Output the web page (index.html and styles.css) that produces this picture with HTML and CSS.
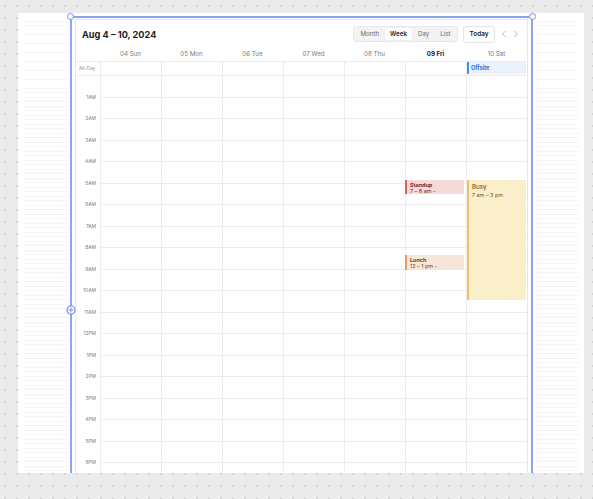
FILE: index.html
```html
<!DOCTYPE html>
<html>
<head>
<meta charset="utf-8">
<link rel="stylesheet" href="styles.css">
</head>
<body>
<div class="canvas">
  <div class="panel">
    <div class="stripes stripes-left"></div>
    <div class="frame">
      <span class="handle handle-tl"></span>
      <span class="handle handle-tr"></span>
      <span class="handle-mid">
        <svg width="10" height="10" viewBox="0 0 10 10"><circle cx="5" cy="5" r="4" fill="#fff" stroke="#6f8ff0" stroke-width="1.2"/><path d="M2.6 5h4.8M5 2.6v4.8" stroke="#6f8ff0" stroke-width="1"/></svg>
      </span>
      <div class="card">
        <div class="toolbar">
          <div class="title">Aug 4 – 10, 2024</div>
          <div class="views">
            <span class="view">Month</span>
            <span class="view active">Week</span>
            <span class="view">Day</span>
            <span class="view">List</span>
          </div>
          <span class="today">Today</span>
          <span class="nav">
            <svg width="6" height="8" viewBox="0 0 6 8"><path d="M4.5 1 1.5 4l3 3" fill="none" stroke="#b9b9b9" stroke-width="1"/></svg>
          </span>
          <span class="nav">
            <svg width="6" height="8" viewBox="0 0 6 8"><path d="M1.5 1l3 3-3 3" fill="none" stroke="#b9b9b9" stroke-width="1"/></svg>
          </span>
        </div>
        <div class="head">
          <div class="gutter"></div>
          <div class="dh">04 Sun</div>
          <div class="dh">05 Mon</div>
          <div class="dh">06 Tue</div>
          <div class="dh">07 Wed</div>
          <div class="dh">08 Thu</div>
          <div class="dh today-h">09 Fri</div>
          <div class="dh">10 Sat</div>
        </div>
        <div class="allday">
          <div class="gutter ad-label">All-Day</div>
          <div class="ad"></div>
          <div class="ad"></div>
          <div class="ad"></div>
          <div class="ad"></div>
          <div class="ad"></div>
          <div class="ad"></div>
          <div class="ad"><div class="ev-allday">Offsite</div></div>
        </div>
        <div class="grid">
          <div class="gutter times">
            <div class="t">1AM</div><div class="t">2AM</div><div class="t">3AM</div><div class="t">4AM</div>
            <div class="t">5AM</div><div class="t">6AM</div><div class="t">7AM</div><div class="t">8AM</div>
            <div class="t">9AM</div><div class="t">10AM</div><div class="t">11AM</div><div class="t">12PM</div>
            <div class="t">1PM</div><div class="t">2PM</div><div class="t">3PM</div><div class="t">4PM</div>
            <div class="t">5PM</div><div class="t">6PM</div>
          </div>
          <div class="col"></div>
          <div class="col"></div>
          <div class="col"></div>
          <div class="col"></div>
          <div class="col"></div>
          <div class="col">
            <div class="ev ev-red" style="top:104px;height:14px"><b>Standup</b><span>7 – 8 am -</span></div>
            <div class="ev ev-orange" style="top:179px;height:15px"><b>Lunch</b><span>12 – 1 pm -</span></div>
          </div>
          <div class="col">
            <div class="ev ev-yellow ev-big" style="top:104px;height:120px"><b>Busy</b><span>7 am – 3 pm</span></div>
          </div>
        </div>
      </div>
    </div>
    <div class="stripes stripes-right"></div>
  </div>
</div>
</body>
</html>
```

FILE: styles.css
```css
html, body {
  margin: 0;
  padding: 0;
}
body {
  width: 593px;
  height: 499px;
  overflow: hidden;
  background-color: #ebebeb;
  background-image: radial-gradient(circle, #cdcdcd 0.6px, transparent 1px);
  background-size: 12px 12px;
  background-position: -1px 0;
  font-family: Inter, "Noto Sans", sans-serif;
  color: #222;
}
.canvas {
  padding: 13px 0 0 18px;
}
.panel {
  width: 566px;
  height: 460px;
  background: #fff;
  overflow: hidden;
  display: flex;
  align-items: stretch;
  gap: 2px;
  padding: 0 6px;
  box-sizing: border-box;
}
.stripes {
  margin-top: 4px;
  background: repeating-linear-gradient(to bottom, transparent 0 3.5px, #f5f5f5 3.5px 4.5px);
}
.stripes-left { width: 44px; }
.stripes-right { width: 43px; }
.frame {
  position: relative;
  width: 463px;
  box-sizing: border-box;
  margin-top: 3px;
  border: 2px solid #8aa6f3;
  border-bottom: none;
  padding: 1px 3px 0 3px;
  height: 470px;
}
.handle {
  position: absolute;
  top: -5px;
  width: 5px;
  height: 5px;
  border: 1.2px solid #6f8ff0;
  border-radius: 50%;
  background: #fff;
}
.handle-tl { left: -5px; }
.handle-tr { right: -5px; }
.handle-mid {
  position: absolute;
  left: -6px;
  top: 287px;
  width: 10px;
  height: 10px;
  display: block;
  line-height: 0;
}
.card {
  width: 453px;
  box-sizing: border-box;
  border: 1px solid #e7e7e7;
  border-bottom: none;
  background: #fff;
  height: 470px;
}
.toolbar {
  display: flex;
  align-items: center;
  height: 25px;
  padding: 0 8px 0 6px;
}
.title {
  flex: 1;
  font-size: 9.2px;
  font-weight: 700;
  color: #1c1c1c;
  padding-top: 3px;
}
.views {
  display: flex;
  align-items: center;
  height: 16px;
  box-sizing: border-box;
  padding: 0 1px;
  background: #f3f3f3;
  border: 1px solid #e8e8e8;
  border-radius: 3px;
  margin-top: 3px;
}
.view {
  font-size: 6.2px;
  color: #6a6a6a;
  padding: 0 5.5px;
  height: 12px;
  line-height: 12px;
  border-radius: 2px;
}
.view.active {
  background: #fff;
  color: #1c1c1c;
  font-weight: 600;
  box-shadow: 0 0 1px rgba(0,0,0,0.12);
}
.today {
  margin-left: 5px;
  margin-top: 3px;
  height: 17px;
  line-height: 15px;
  box-sizing: border-box;
  padding: 0 5.5px;
  border: 1px solid #e4e4e4;
  border-radius: 3px;
  font-size: 6.4px;
  font-weight: 600;
  color: #1c1c1c;
}
.nav {
  display: block;
  line-height: 0;
  margin-left: 6px;
  margin-top: 3px;
}
.head, .allday, .grid {
  display: grid;
  grid-template-columns: 24px repeat(7, 61px);
}
.head {
  height: 16px;
  border-bottom: 1px solid #ececec;
}
.dh {
  font-size: 6.2px;
  color: #7a7a7a;
  text-align: center;
  line-height: 16px;
  padding-top: 1px;
}
.dh.today-h {
  color: #1c1c1c;
  font-weight: 700;
}
.allday {
  height: 13px;
  border-bottom: 1px solid #ececec;
}
.ad-label {
  font-size: 4.6px;
  color: #8a8a8a;
  text-align: right;
  padding-right: 5px;
  line-height: 13px;
}
.ad {
  border-left: 1px solid #ececec;
}
.ev-allday {
  height: 12px;
  margin-right: 1px;
  background: #e9f2fc;
  border-left: 2px solid #4a8ef0;
  font-size: 5.6px;
  font-weight: 700;
  color: #2f6fd8;
  line-height: 12px;
  padding-left: 2px;
}
.grid {
  height: 420px;
}
.times {
  padding-top: 10.75px;
}
.t {
  height: 21.5px;
  line-height: 21.5px;
  font-size: 4.9px;
  color: #808080;
  text-align: right;
  padding-right: 4px;
}
.col {
  position: relative;
  border-left: 1px solid #ececec;
  background: repeating-linear-gradient(to bottom, transparent 0 21px, #ececec 21px 22px, transparent 22px 42px, #ececec 42px 43px);
}
.ev {
  position: absolute;
  left: -1px;
  right: 2px;
  box-sizing: border-box;
  border-left: 2px solid;
  padding: 2px 3px;
  display: flex;
  flex-direction: column;
  font-size: 5.4px;
  line-height: 6px;
}
.ev b { font-weight: 700; }
.ev-red {
  background: #f5d8d8;
  border-color: #d9605c;
  color: #7f2424;
}
.ev-orange {
  background: #f6e6d9;
  border-color: #e39d5f;
  color: #6e3f17;
}
.ev-yellow {
  background: #fbeecb;
  border-color: #ebc464;
  color: #6e5818;
  left: 0;
  right: 1px;
}
.ev-big {
  padding: 3px 3px;
  font-size: 5.4px;
  line-height: 8px;
}
.ev-big b {
  font-weight: 500;
  font-size: 6.2px;
}
```
